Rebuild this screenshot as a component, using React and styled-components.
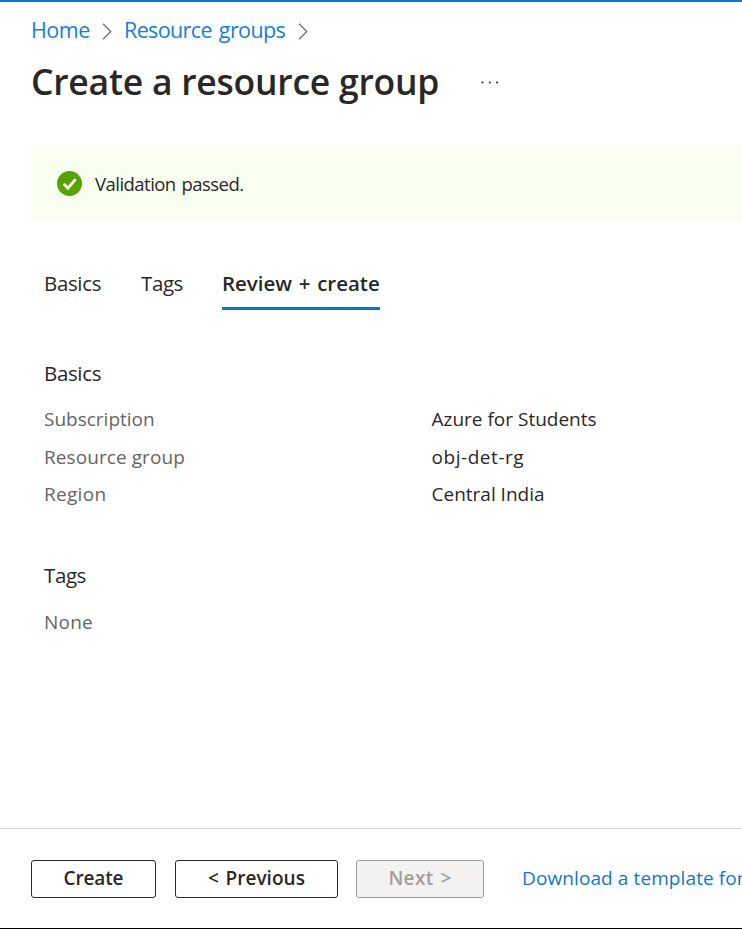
import React from "react";
import styled, { createGlobalStyle } from "styled-components";

const GlobalStyle = createGlobalStyle`
  * { box-sizing: border-box; }
  body {
    margin: 0;
    overflow: hidden;
    background: #fff;
    color: #292827;
    font-family: "Open Sans", "Noto Sans", sans-serif;
  }
`;

const Page = styled.div`
  display: flex;
  flex-direction: column;
  height: 929px;
  overflow: hidden;
  border-top: 2px solid #0078d4;
  border-bottom: 1px solid #000;
  white-space: nowrap;
`;

const Breadcrumb = styled.nav`
  display: flex;
  align-items: center;
  height: 30px;
  margin: 13px 0 0 31px;
`;

const Crumb = styled.a`
  color: #1580d8;
  font-size: 21.5px;
  line-height: 30px;
  letter-spacing: ${(p) => p.$spacing};
  word-spacing: 2px;
  width: ${(p) => p.$width};
`;

const Chevron = styled.svg`
  width: 10px;
  height: 17px;
  margin: 2px 12px 0 12px;
  fill: none;
  stroke: #6b6967;
  stroke-width: 1.2;
`;

const Heading = styled.header`
  display: flex;
  align-items: center;
  height: 50px;
  margin: 12px 0 0 31px;
`;

const Title = styled.h1`
  width: 449px;
  margin: 0 0 2px;
  font-size: 35.5px;
  font-weight: 600;
  line-height: 48px;
  letter-spacing: -0.24px;
`;

const Dots = styled.svg`
  width: 18px;
  height: 4px;
  margin: 2px 0 0 1px;
  fill: #3b3a39;
`;

const Banner = styled.section`
  display: flex;
  align-items: center;
  gap: 13px;
  height: 77px;
  margin: 38px 0 0 31px;
  padding-left: 26px;
  border-radius: 3px 0 0 3px;
  background: #f8fff0;
  font-size: 18.5px;
`;

const CheckIcon = styled.svg`
  width: 25px;
  height: 25px;
`;

const BannerText = styled.span`
  letter-spacing: -0.53px;
  word-spacing: 1.5px;
`;

const TabList = styled.div`
  display: flex;
  height: 45px;
  margin: 43px 0 0 44px;
`;

const Tab = styled.div`
  width: ${(p) => p.$width};
  margin-right: 40px;
  font-size: 20.5px;
  line-height: 36px;
  font-weight: ${(p) => (p.$active ? 600 : 400)};
  letter-spacing: ${(p) => p.$spacing};
  word-spacing: 1.5px;
  border-bottom: 3px solid ${(p) => (p.$active ? "#0078d4" : "transparent")};
`;

const Section = styled.section`
  margin: ${(p) => p.$top} 0 0 44px;
`;

const SectionTitle = styled.h2`
  height: 30px;
  margin: 0 0 ${(p) => p.$gap};
  font-size: 20.5px;
  font-weight: 400;
  line-height: 30px;
  letter-spacing: ${(p) => p.$spacing};
`;

const Row = styled.div`
  display: grid;
  grid-template-columns: 387.5px 1fr;
  height: 37.5px;
  font-size: 19px;
  line-height: 37.5px;
`;

const Label = styled.span`
  color: #666564;
  letter-spacing: ${(p) => p.$spacing};
`;

const Value = styled.span`
  letter-spacing: ${(p) => p.$spacing};
`;

const Footer = styled.footer`
  display: flex;
  align-items: flex-start;
  height: 100px;
  margin-top: auto;
  padding: 31px 0 0 31px;
  border-top: 1px solid #dddcdb;
`;

const Button = styled.button`
  flex: none;
  width: ${(p) => p.$width};
  height: 38px;
  margin-right: ${(p) => p.$gap};
  padding: 0 0 2px;
  border: 1px solid #292827;
  border-radius: 3px;
  background: #fff;
  color: #292827;
  font: 600 19px/34px "Open Sans", "Noto Sans", sans-serif;
  letter-spacing: ${(p) => p.$spacing};
  word-spacing: 1.5px;
  &:disabled {
    border-color: #a19f9d;
    background: #f3f2f1;
    color: #a19f9d;
  }
`;

const TemplateLink = styled.a`
  color: #1276d1;
  font-size: 19px;
  line-height: 36px;
  letter-spacing: 0.1px;
`;

const Separator = () => (
  <Chevron viewBox="0 0 10 17">
    <path d="M1 .8 8.8 8.5 1 16.2" />
  </Chevron>
);

export default function App() {
  return (
    <Page>
      <GlobalStyle />
      <Breadcrumb>
        <Crumb $width="59px" $spacing="-0.5px">Home</Crumb>
        <Separator />
        <Crumb $width="162px" $spacing="-0.62px">Resource groups</Crumb>
        <Separator />
      </Breadcrumb>
      <Heading>
        <Title>Create a resource group</Title>
        <Dots viewBox="0 0 18 4">
          <circle cx="1.5" cy="1.5" r="1.1" />
          <circle cx="8.8" cy="1.5" r="1.1" />
          <circle cx="16" cy="1.5" r="1.1" />
        </Dots>
      </Heading>
      <Banner>
        <CheckIcon viewBox="0 0 25 25">
          <circle cx="12.5" cy="12.5" r="12.5" fill="#57a300" />
          <path d="M6.6 12.8 11 17.2 18.6 8.2" fill="none" stroke="#fff" strokeWidth="2.8" />
        </CheckIcon>
        <BannerText>Validation passed.</BannerText>
      </Banner>
      <TabList>
        <Tab $width="57px" $spacing="-0.35px">Basics</Tab>
        <Tab $width="41px" $spacing="-0.4px">Tags</Tab>
        <Tab $width="158px" $spacing="-0.03px" $active>Review + create</Tab>
      </TabList>
      <Section $top="48px">
        <SectionTitle $gap="13px" $spacing="-0.35px">Basics</SectionTitle>
        <Row><Label $spacing="0px">Subscription</Label><Value $spacing="0px">Azure for Students</Value></Row>
        <Row><Label $spacing="0.08px">Resource group</Label><Value $spacing="0.55px">obj-det-rg</Value></Row>
        <Row><Label $spacing="0.3px">Region</Label><Value $spacing="0px">Central India</Value></Row>
      </Section>
      <Section $top="46px">
        <SectionTitle $gap="14px" $spacing="-0.4px">Tags</SectionTitle>
        <Row><Label $spacing="0.2px">None</Label></Row>
      </Section>
      <Footer>
        <Button $width="125px" $gap="19px" $spacing="-0.15px">Create</Button>
        <Button $width="163px" $gap="18px" $spacing="0.05px">&lt; Previous</Button>
        <Button $width="128px" $gap="38px" $spacing="0.35px" disabled>Next &gt;</Button>
        <TemplateLink>Download a template for</TemplateLink>
      </Footer>
    </Page>
  );
}
